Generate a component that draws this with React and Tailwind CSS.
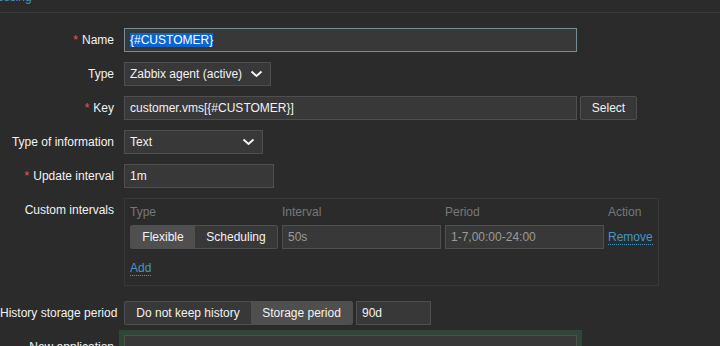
import React from 'react';

const Chevron = () => (
  <svg width="13" height="8" viewBox="0 0 13 8" className="shrink-0">
    <polyline points="1.5,1.5 6.5,6 11.5,1.5" fill="none" stroke="#f2f2f2" strokeWidth="2" />
  </svg>
);

const Label = ({ required, children, className = '' }) => (
  <div className={`w-[114px] shrink-0 text-right whitespace-nowrap ${className}`}>
    {required && <span className="text-[#e45959] mr-[4px]">*</span>}
    {children}
  </div>
);

const Row = ({ label, required, children, className = '' }) => (
  <div className={`flex items-center h-[24px] ${className}`}>
    <Label required={required}>{label}</Label>
    <div className="ml-[10px] flex items-center">{children}</div>
  </div>
);

const input = 'h-[24px] bg-[#383838] border border-[#4f4f4f] px-[5px] flex items-center';
const link = 'text-[#4796c4] border-b border-dotted border-[#4796c4] leading-[14px]';

const App = () => {
  return (
    <div className="w-[720px] h-[346px] overflow-hidden bg-[#2b2b2b] text-[#f2f2f2] text-[12px] font-['Liberation_Sans',Arial,sans-serif]">
      <div className="h-[13px] overflow-hidden border-b border-[#383838]">
        <div className="ml-[-45px] mt-[-10px] leading-[14px] text-[#4796c4] whitespace-nowrap">Preprocessing</div>
      </div>

      <div className="pt-[15px]">
        <Row label="Name" required className="mb-[10px]">
          <div className={`${input} w-[453px] border-[#768d99]`}>
            <span className="bg-[#0b64d4] text-white leading-[14px]">{'{#CUSTOMER}'}</span>
          </div>
        </Row>

        <Row label="Type" className="mb-[10px]">
          <div className={`${input} w-[147px] justify-between pr-[7px]`}>
            <span>Zabbix agent (active)</span>
            <Chevron />
          </div>
        </Row>

        <Row label="Key" required className="mb-[10px]">
          <div className={`${input} w-[453px]`}>customer.vms[{'{#CUSTOMER}'}]</div>
          <button className={`${input} w-[57px] ml-[3px] justify-center rounded-[2px]`}>Select</button>
        </Row>

        <Row label="Type of information" className="mb-[10px]">
          <div className={`${input} w-[139px] justify-between pr-[7px]`}>
            <span>Text</span>
            <Chevron />
          </div>
        </Row>

        <Row label="Update interval" required className="mb-[10px]">
          <div className={`${input} w-[150px]`}>1m</div>
        </Row>

        <div className="flex items-start">
          <Label className="leading-[24px]">Custom intervals</Label>
          <div className="ml-[10px] w-[535px] h-[88px] border border-[#383838] pl-[5px] pt-[5px]">
            <div className="grid grid-cols-[148px_159px_159px_auto] gap-x-[4px] text-[#787878] leading-[16px]">
              <div>Type</div>
              <div>Interval</div>
              <div>Period</div>
              <div>Action</div>
            </div>
            <div className="grid grid-cols-[148px_159px_159px_auto] gap-x-[4px] mt-[5px] items-center">
              <div className="flex h-[24px] border border-[#4f4f4f] rounded-[2px] overflow-hidden">
                <div className="w-[64px] bg-[#4f4f4f] flex items-center justify-center">Flexible</div>
                <div className="flex-1 bg-[#383838] flex items-center justify-center">Scheduling</div>
              </div>
              <div className={`${input} text-[#9a9a9a]`}>50s</div>
              <div className={`${input} text-[#9a9a9a]`}>1-7,00:00-24:00</div>
              <div>
                <span className={link}>Remove</span>
              </div>
            </div>
            <div className="mt-[10px]">
              <span className={link}>Add</span>
            </div>
          </div>
        </div>

        <Row label="History storage period" className="mt-[15px] mb-[10px]">
          <div className="flex h-[24px] border border-[#4f4f4f] rounded-[2px] overflow-hidden">
            <div className="w-[126px] bg-[#383838] flex items-center justify-center">Do not keep history</div>
            <div className="w-[101px] bg-[#4f4f4f] flex items-center justify-center">Storage period</div>
          </div>
          <div className={`${input} w-[75px] ml-[3px]`}>90d</div>
        </Row>

        <Row label="New application">
          <div className={`${input} w-[453px] shadow-[0_0_0_5px_#2e4537]`} />
        </Row>
      </div>
    </div>
  );
};

export default App;
